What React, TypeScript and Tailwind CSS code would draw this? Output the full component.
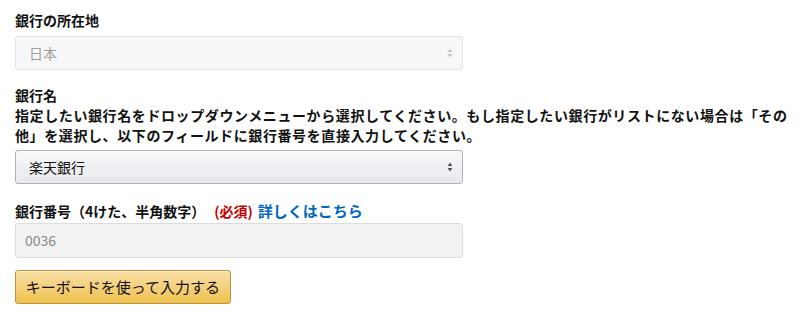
import React from "react";

const FONT = { fontFamily: '"Noto Sans CJK JP", "Noto Sans", sans-serif' };

function UpDown({ color }: { color: string }) {
  return (
    <svg width="6" height="10" viewBox="0 0 6 10" className="shrink-0">
      <path d="M3 0.5 L5.5 4 L0.5 4 Z" fill={color} />
      <path d="M3 9.5 L5.5 6 L0.5 6 Z" fill={color} />
    </svg>
  );
}

export default function App() {
  return (
    <div
      className="w-[800px] h-[319px] bg-white pl-[15px] pt-[10px] text-[#111]"
      style={FONT}
    >
      {/* Bank location */}
      <div className="text-[14px] leading-[20px] font-bold">銀行の所在地</div>
      <div className="mt-[6px] w-[448px] h-[34px] flex items-center justify-between pl-[13px] pr-[9px] rounded-[3px] border border-[#e2e4e7] bg-[#f6f7f9]">
        <span className="text-[14px] text-[#a0a0a0]">日本</span>
        <UpDown color="#c5c8cc" />
      </div>

      {/* Bank name */}
      <div className="mt-[15px] text-[14px] leading-[20px] font-bold">銀行名</div>
      <p className="w-[785px] text-[14px] leading-[20px] font-bold tracking-[0.6px]">
        指定したい銀行名をドロップダウンメニューから選択してください。もし指定したい銀行がリストにない場合は「その他」を選択し、以下のフィールドに銀行番号を直接入力してください。
      </p>
      <div className="mt-[5px] w-[448px] h-[34px] flex items-center justify-between pl-[13px] pr-[9px] rounded-[3px] border border-[#adb1b8] bg-gradient-to-b from-[#f7f8fa] to-[#e7e9ec] shadow-[0_1px_0_rgba(255,255,255,0.6)_inset]">
        <span className="text-[14px] text-[#111]">楽天銀行</span>
        <UpDown color="#555" />
      </div>

      {/* Bank number */}
      <div className="mt-[17px] text-[14px] leading-[20px] font-bold flex items-center">
        <span>銀行番号（4けた、半角数字）</span>
        <span className="text-[#c40000] ml-[9px]">(必須)</span>
        <span className="text-[#0066c0] ml-[5px] text-[15px]">詳しくはこちら</span>
      </div>
      <div className="mt-[2px] w-[448px] h-[35px] flex items-center pl-[9px] rounded-[3px] border border-[#dcdcdc] bg-[#f2f2f2]">
        <span className="text-[14px] text-[#888]">0036</span>
      </div>

      <button className="mt-[12px] w-[216px] h-[34px] flex items-center justify-center rounded-[3px] border border-[#b89540] bg-gradient-to-b from-[#f7dfa5] to-[#f0c14b] shadow-[0_1px_0_rgba(255,255,255,0.4)_inset] text-[15px] text-[#111]">
        キーボードを使って入力する
      </button>
    </div>
  );
}
